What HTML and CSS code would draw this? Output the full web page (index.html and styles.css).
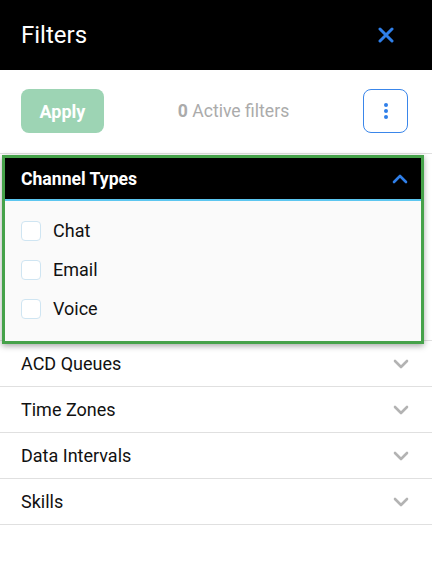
FILE: index.html
```html
<!DOCTYPE html>
<html lang="en">
<head>
	<meta charset="UTF-8">
	<title>Filters</title>
<link rel="stylesheet" href="styles.css">
</head>
<body>
<div class="header">
	<span class="title">Filters</span>
	<button class="close" type="button">
		<svg width="16" height="16" viewBox="0 0 16 16"><path d="M2 2L14 14M14 2L2 14" stroke="#2f7fe9" stroke-width="3" stroke-linecap="round"/></svg>
	</button>
</div>

<div class="toolbar">
	<button class="apply" type="button">Apply</button>
	<span class="count"><b>0</b> Active filters</span>
	<button class="more" type="button">
		<span class="dot"></span><span class="dot"></span><span class="dot"></span>
	</button>
</div>

<div class="item-open">
	<div class="card">
		<div class="card_head">
			<span>Channel Types</span>
			<svg width="16" height="10" viewBox="0 0 16 10"><path d="M2 8L8 2L14 8" fill="none" stroke="#2f7fe9" stroke-width="2.6" stroke-linecap="round" stroke-linejoin="round"/></svg>
		</div>
		<div class="card_body">
			<label class="check_row"><span class="box"></span>Chat</label>
			<label class="check_row"><span class="box"></span>Email</label>
			<label class="check_row"><span class="box"></span>Voice</label>
		</div>
	</div>
</div>

<div class="item"><span>ACD Queues</span>
	<svg width="16" height="10" viewBox="0 0 16 10"><path d="M2 2L8 8L14 2" fill="none" stroke="#b3b3b3" stroke-width="2.6" stroke-linecap="round" stroke-linejoin="round"/></svg>
</div>
<div class="item"><span>Time Zones</span>
	<svg width="16" height="10" viewBox="0 0 16 10"><path d="M2 2L8 8L14 2" fill="none" stroke="#b3b3b3" stroke-width="2.6" stroke-linecap="round" stroke-linejoin="round"/></svg>
</div>
<div class="item"><span>Data Intervals</span>
	<svg width="16" height="10" viewBox="0 0 16 10"><path d="M2 2L8 8L14 2" fill="none" stroke="#b3b3b3" stroke-width="2.6" stroke-linecap="round" stroke-linejoin="round"/></svg>
</div>
<div class="item"><span>Skills</span>
	<svg width="16" height="10" viewBox="0 0 16 10"><path d="M2 2L8 8L14 2" fill="none" stroke="#b3b3b3" stroke-width="2.6" stroke-linecap="round" stroke-linejoin="round"/></svg>
</div>
</body>
</html>
```

FILE: styles.css
```css
	body{
		margin: 0;
		font-family: Roboto, "Liberation Sans", sans-serif;
		background: #fff;
		color: #111;
	}
	button{
		font-family: inherit;
		cursor: pointer;
	}
	.header{
		height: 70px;
		background: #000;
		display: flex;
		align-items: center;
		justify-content: space-between;
		padding: 0 26px 0 21px;
	}
	.title{
		color: #fff;
		font-size: 24px;
	}
	.close{
		width: 40px;
		height: 40px;
		border: none;
		background: none;
		padding: 0;
		display: flex;
		align-items: center;
		justify-content: center;
	}
	.toolbar{
		box-sizing: border-box;
		height: 84px;
		border-bottom: 1px solid #e0e0e0;
		display: flex;
		align-items: center;
		justify-content: space-between;
		padding: 0 24px 1px 21px;
	}
	.apply{
		width: 83px;
		height: 44px;
		border: none;
		border-radius: 8px;
		background: #9dd4b4;
		color: #fff;
		font-size: 18px;
		font-weight: 700;
	}
	.count{
		color: #ababab;
		font-size: 17.6px;
	}
	.more{
		width: 45px;
		height: 44px;
		border: 1px solid #3a86ea;
		border-radius: 8px;
		background: #fff;
		display: flex;
		flex-direction: column;
		align-items: center;
		justify-content: center;
		gap: 2px;
		padding: 0;
	}
	.dot{
		width: 4px;
		height: 4px;
		border-radius: 50%;
		background: #2f7fe9;
	}
	.item-open{
		border-bottom: 1px solid #e0e0e0;
	}
	.card{
		position: relative;
		z-index: 1;
		margin: 1px 8px -4px 2px;
		border: 3px solid #46a24a;
		box-shadow: 0 2px 6px rgba(0, 0, 0, 0.35);
		background: #fafafa;
	}
	.card_head{
		height: 41px;
		background: #000;
		border-bottom: 2px solid #5cc6f0;
		display: flex;
		align-items: center;
		justify-content: space-between;
		padding: 0 13px 0 16px;
		color: #fff;
		font-size: 17.6px;
		font-weight: 700;
	}
	.card_body{
		padding: 10px 16px 13px;
	}
	.check_row{
		height: 39px;
		display: flex;
		align-items: center;
		gap: 12px;
		font-size: 18px;
	}
	.box{
		box-sizing: border-box;
		width: 20px;
		height: 20px;
		border: 1px solid #cfe5f2;
		border-radius: 4px;
		background: #fff;
	}
	.item{
		height: 45px;
		border-bottom: 1px solid #e0e0e0;
		display: flex;
		align-items: center;
		justify-content: space-between;
		padding: 0 23px 0 21px;
		font-size: 18px;
	}
```
